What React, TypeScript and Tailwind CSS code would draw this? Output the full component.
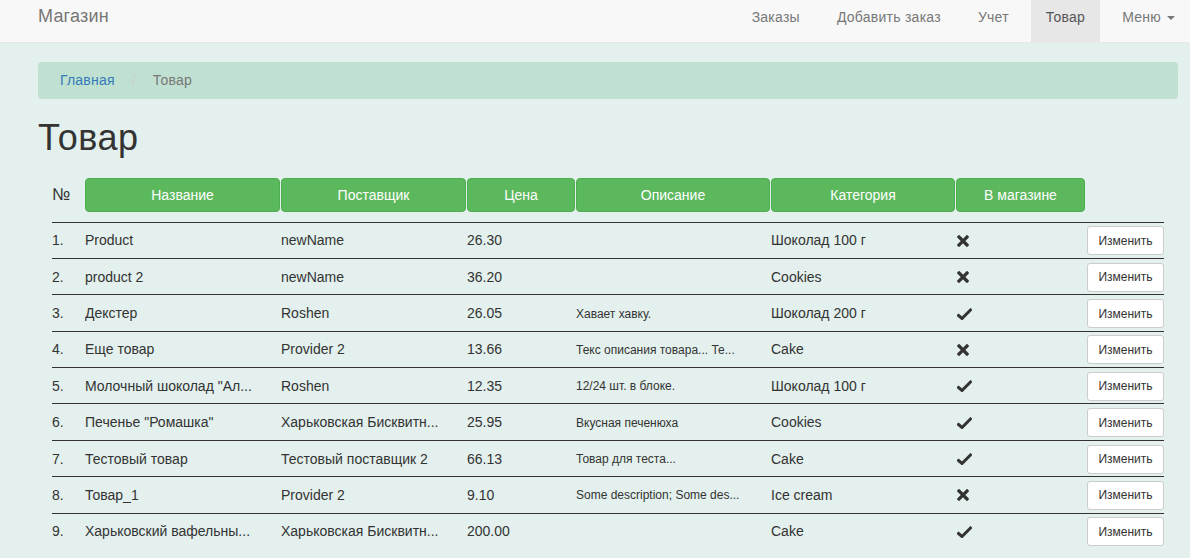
import React from "react";

const NAV = [
  { label: "Заказы" },
  { label: "Добавить заказ" },
  { label: "Учет" },
  { label: "Товар", active: true },
];

const COLS = ["Название", "Поставщик", "Цена", "Описание", "Категория", "В магазине"];

const ROWS = [
  { name: "Product", provider: "newName", price: "26.30", desc: "", cat: "Шоколад 100 г", inStore: false },
  { name: "product 2", provider: "newName", price: "36.20", desc: "", cat: "Cookies", inStore: false },
  { name: "Декстер", provider: "Roshen", price: "26.05", desc: "Хавает хавку.", cat: "Шоколад 200 г", inStore: true },
  { name: "Еще товар", provider: "Provider 2", price: "13.66", desc: "Текс описания товара... Те...", cat: "Cake", inStore: false },
  { name: "Молочный шоколад \"Ал...", provider: "Roshen", price: "12.35", desc: "12/24 шт. в блоке.", cat: "Шоколад 100 г", inStore: true },
  { name: "Печенье \"Ромашка\"", provider: "Харьковская Бисквитн...", price: "25.95", desc: "Вкусная печенюха", cat: "Cookies", inStore: true },
  { name: "Тестовый товар", provider: "Тестовый поставщик 2", price: "66.13", desc: "Товар для теста...", cat: "Cake", inStore: true },
  { name: "Товар_1", provider: "Provider 2", price: "9.10", desc: "Some description; Some des...", cat: "Ice cream", inStore: false },
  { name: "Харьковский вафельны...", provider: "Харьковская Бисквитн...", price: "200.00", desc: "", cat: "Cake", inStore: true },
];

const GRID = "grid grid-cols-[33px_196px_186px_109px_195px_185px_130px_78px]";

function RemoveIcon() {
  return (
    <svg width="12" height="12" viewBox="0 0 12 12" aria-hidden>
      <path d="M2 2 L10 10 M10 2 L2 10" stroke="#333" strokeWidth="3.2" strokeLinecap="square" />
    </svg>
  );
}

function OkIcon() {
  return (
    <svg width="15" height="12" viewBox="0 0 15 12" aria-hidden>
      <path d="M1.5 7.5 L5 10.5 L13.5 2" stroke="#333" strokeWidth="3" fill="none" strokeLinecap="square" />
    </svg>
  );
}

export default function App() {
  return (
    <div className="min-h-[558px] bg-[#e3f0ed] font-['Liberation_Sans',Arial,sans-serif] text-[#333]">
      <nav className="flex h-[43px] items-start justify-between border-b border-[#e7e7e7] bg-[#f8f8f8]">
        <a className="ml-[38px] pt-[6px] text-[18px] leading-[20px] tracking-[0.2px] text-[#777]">Магазин</a>
        <ul className="flex h-[42px] gap-[7px] tracking-[0.25px]">
          {NAV.map((n) => (
            <li
              key={n.label}
              className={
                n.active
                  ? "h-full bg-[#e7e7e7] px-[15px] pt-[7px] text-[14px] leading-[20px] text-[#555]"
                  : "h-full px-[15px] pt-[7px] text-[14px] leading-[20px] text-[#777]"
              }
            >
              {n.label}
            </li>
          ))}
          <li className="flex h-full items-start px-[15px] pt-[7px] text-[14px] leading-[20px] text-[#777]">
            Меню
            <span className="ml-[6px] mt-[9px] h-0 w-0 border-x-[4px] border-t-[4px] border-x-transparent border-t-[#777]" />
          </li>
        </ul>
      </nav>

      <div className="ml-[38px] w-[1140px]">
        <ol className="mt-[19px] flex h-[37px] items-center rounded-[4px] bg-[#c0e1d2] px-[22px] text-[14px] tracking-[0.2px]">
          <li className="text-[#337ab7]">Главная</li>
          <li className="px-[17px] text-[#ccc]">/</li>
          <li className="text-[#777]">Товар</li>
        </ol>

        <h1 className="mt-[19px] text-[36px] leading-[1.1] tracking-[0.5px]">Товар</h1>

        <div className="ml-[14px] mt-[20px] w-[1112px]">
          <div className={`${GRID} h-[34px] items-center`}>
            <div className="text-[17px]">№</div>
            {COLS.map((c) => (
              <div
                key={c}
                className="mr-px flex h-[34px] items-center justify-center rounded-[4px] border border-[#4cae4c] bg-[#5cb85c] pt-px text-[14px] text-white"
              >
                {c}
              </div>
            ))}
            <div />
          </div>

          <div className="mt-[10px]">
            {ROWS.map((r, i) => (
              <div key={i} className={`${GRID} h-[36.375px] items-center border-t border-[#333] pt-px text-[14px]`}>
                <div>{i + 1}.</div>
                <div className="truncate">{r.name}</div>
                <div className="truncate">{r.provider}</div>
                <div>{r.price}</div>
                <div className="truncate text-[12px]">{r.desc}</div>
                <div>{r.cat}</div>
                <div className="flex pl-[1px]">{r.inStore ? <OkIcon /> : <RemoveIcon />}</div>
                <div className="flex justify-end">
                  <button className="h-[29px] w-[77px] rounded-[3px] border border-[#ccc] bg-white text-[12px] text-[#333]">
                    Изменить
                  </button>
                </div>
              </div>
            ))}
          </div>
        </div>
      </div>
    </div>
  );
}
